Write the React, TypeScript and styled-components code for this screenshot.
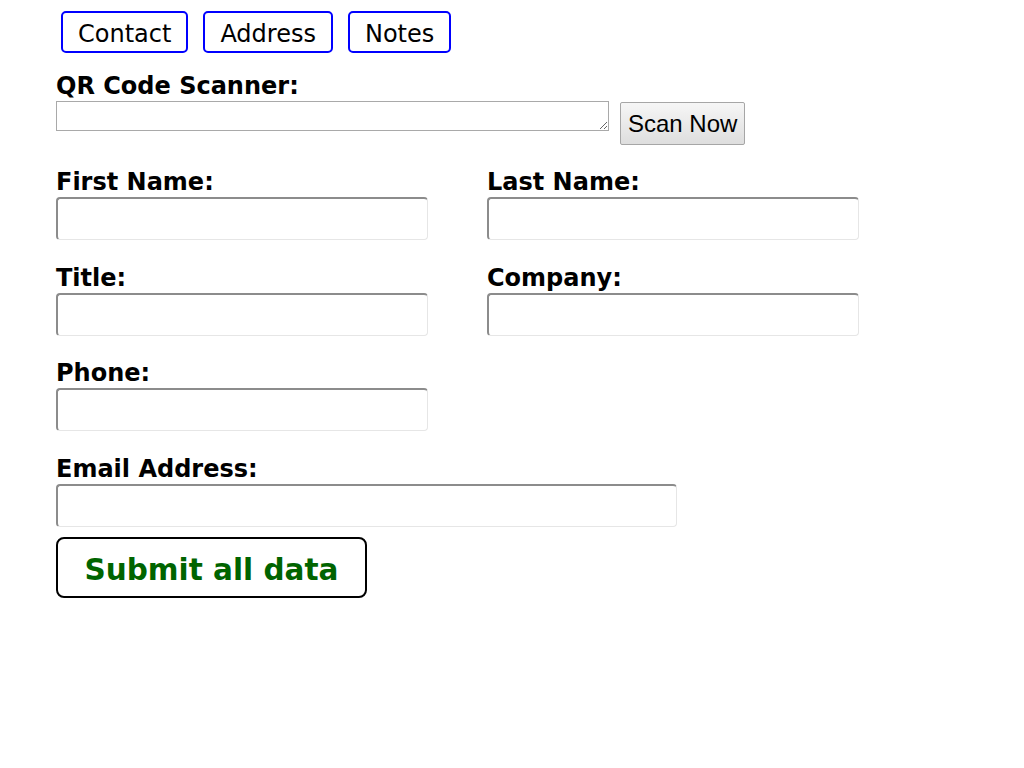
import React, { useState } from 'react';
import styled, { createGlobalStyle } from 'styled-components';

// ============================================================================
// STYLED COMPONENTS
// ============================================================================

const GlobalStyle = createGlobalStyle`
  body {
    margin: 8px;
    background: #ffffff;
    font-family: "DejaVu Sans", Verdana, sans-serif;
    color: #000000;
  }
`;

const Page = styled.div`
  padding: 3px 0 0 48px;
`;

const Tabs = styled.div`
  display: flex;
  gap: 15px;
  margin-left: 5px;
`;

const TabButton = styled.button<{ $active?: boolean }>`
  font-family: "DejaVu Sans", Verdana, sans-serif;
  font-size: 24px;
  line-height: 28px;
  color: #000000;
  background: #ffffff;
  border: 2px solid #0000ff;
  border-radius: 5px;
  padding: 7px 15px 3px;
  cursor: pointer;
`;

const Label = styled.label`
  display: block;
  font-size: 24px;
  font-weight: bold;
  line-height: 28px;
`;

const ScannerBlock = styled.div`
  margin-top: 19px;
`;

const ScannerRow = styled.div`
  display: flex;
  align-items: flex-start;
  gap: 11px;
  margin-top: 1px;
`;

const ScanArea = styled.textarea`
  box-sizing: border-box;
  width: 553px;
  height: 30px;
  border: 1px solid #a9a9a9;
  padding: 2px;
  margin: 0;
  font-family: "Liberation Mono", monospace;
  font-size: 13px;
`;

const ScanButton = styled.button`
  box-sizing: border-box;
  margin-top: 1px;
  height: 43px;
  padding: 0 7px;
  font-family: "Liberation Sans", Arial, sans-serif;
  font-size: 24px;
  color: #000000;
  background: linear-gradient(#f6f6f6, #dedede);
  border: 1px solid #a6a6a6;
  border-radius: 2px;
  cursor: pointer;
`;

const FieldGrid = styled.div`
  display: grid;
  grid-template-columns: 372px 372px;
  column-gap: 59px;
  row-gap: 23.5px;
  margin-top: 23px;
`;

const Field = styled.div<{ $wide?: boolean }>`
  grid-column: ${({ $wide }) => ($wide ? '1 / span 2' : 'auto')};
`;

const TextInput = styled.input<{ $wide?: boolean }>`
  box-sizing: border-box;
  display: block;
  width: ${({ $wide }) => ($wide ? '621px' : '372px')};
  height: 43px;
  margin: 1px 0 0;
  padding: 4px 8px;
  font-family: "DejaVu Sans", Verdana, sans-serif;
  font-size: 20px;
  border: 1px solid #e6e6e6;
  border-top: 2px solid #8c8c8c;
  border-left: 2px solid #8c8c8c;
  border-radius: 4px;
  outline: none;
`;

const SubmitButton = styled.button`
  box-sizing: border-box;
  display: block;
  margin-top: 10px;
  width: 311px;
  height: 61px;
  padding: 5px 0 0;
  font-family: "DejaVu Sans", Verdana, sans-serif;
  font-size: 29.5px;
  font-weight: bold;
  color: #006400;
  background: #ffffff;
  border: 2px solid #000000;
  border-radius: 8px;
  cursor: pointer;
`;

// ============================================================================
// COMPONENT
// ============================================================================

const TABS = ['Contact', 'Address', 'Notes'];

const FIELDS = [
    { id: 'firstName', label: 'First Name:' },
    { id: 'lastName', label: 'Last Name:' },
    { id: 'title', label: 'Title:' },
    { id: 'company', label: 'Company:' },
    { id: 'phone', label: 'Phone:' },
    { id: 'email', label: 'Email Address:', wide: true },
];

const App: React.FC = () => {
    const [tab, setTab] = useState('Contact');

    return (
        <>
            <GlobalStyle />
            <Page>
                <Tabs>
                    {TABS.map((name) => (
                        <TabButton key={name} $active={tab === name} onClick={() => setTab(name)}>
                            {name}
                        </TabButton>
                    ))}
                </Tabs>

                <ScannerBlock>
                    <Label htmlFor="qr">QR Code Scanner:</Label>
                    <ScannerRow>
                        <ScanArea id="qr" />
                        <ScanButton>Scan Now</ScanButton>
                    </ScannerRow>
                </ScannerBlock>

                <FieldGrid>
                    {FIELDS.map((f) => (
                        <Field key={f.id} $wide={f.wide}>
                            <Label htmlFor={f.id}>{f.label}</Label>
                            <TextInput id={f.id} $wide={f.wide} />
                        </Field>
                    ))}
                </FieldGrid>

                <SubmitButton>Submit all data</SubmitButton>
            </Page>
        </>
    );
};

export default App;
